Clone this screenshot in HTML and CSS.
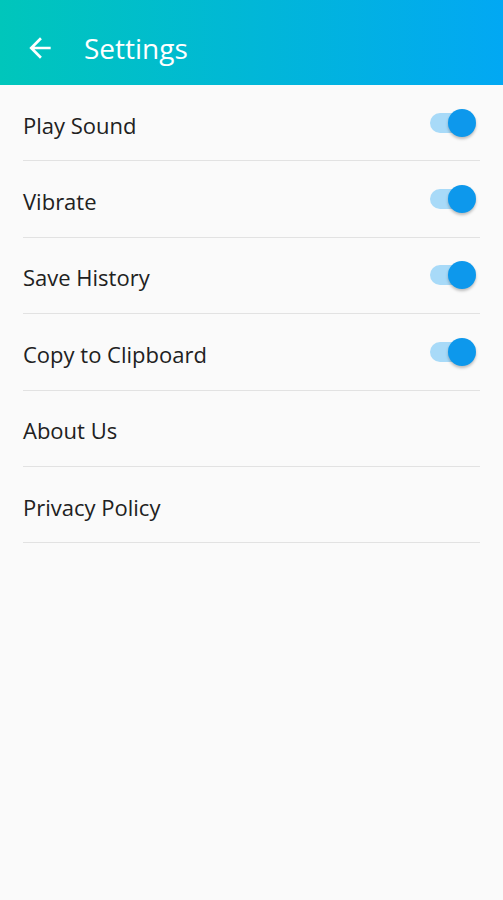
FILE: index.html
```html
<!DOCTYPE html>
<html lang="en">
  <head>
    <meta charset="UTF-8" />
    <meta name="viewport" content="width=device-width, initial-scale=1" />
    <title>Settings</title>
    <link rel="stylesheet" href="styles.css">
  </head>
  <body>
    <header class="toolbar">
      <button class="backBtn" title="Back">
        <svg width="32" height="32" viewBox="0 0 24 24">
          <path d="M20 11H7.83l5.59-5.59L12 4l-8 8 8 8 1.41-1.41L7.83 13H20v-2z" fill="#fff" />
        </svg>
      </button>
      <h1 class="toolbarTitle">Settings</h1>
    </header>

    <ul class="settingsList">
      <li class="settingsRow">
        <span class="rowLabel">Play Sound</span>
        <span class="switch"><span class="switchTrack"></span><span class="switchThumb"></span></span>
      </li>
      <li class="settingsRow">
        <span class="rowLabel">Vibrate</span>
        <span class="switch"><span class="switchTrack"></span><span class="switchThumb"></span></span>
      </li>
      <li class="settingsRow">
        <span class="rowLabel">Save History</span>
        <span class="switch"><span class="switchTrack"></span><span class="switchThumb"></span></span>
      </li>
      <li class="settingsRow">
        <span class="rowLabel">Copy to Clipboard</span>
        <span class="switch"><span class="switchTrack"></span><span class="switchThumb"></span></span>
      </li>
      <li class="settingsRow">
        <span class="rowLabel">About Us</span>
      </li>
      <li class="settingsRow">
        <span class="rowLabel">Privacy Policy</span>
      </li>
    </ul>
  </body>
</html>
```

FILE: styles.css
```css
html,
body {
  margin: 0;
  padding: 0;
  height: 100%;
  font-family: "Open Sans", "Noto Sans", sans-serif;
  background: #fafafa;
}

.toolbar {
  height: 85px;
  display: flex;
  align-items: center;
  background: linear-gradient(90deg, #00c6bb, #02a8f3);
  box-sizing: border-box;
  padding-left: 24px;
  padding-top: 10px;
}

.backBtn {
  width: 32px;
  height: 32px;
  padding: 0;
  border: none;
  background: none;
  display: flex;
  align-items: center;
  justify-content: center;
  cursor: pointer;
}

.toolbarTitle {
  margin: 0 0 0 28px;
  color: #fff;
  font-size: 28px;
  font-weight: 400;
  line-height: 1;
}

.settingsList {
  list-style: none;
  margin: 0 23px;
  padding: 0;
}

.settingsRow {
  height: 75.4px;
  display: flex;
  align-items: center;
  justify-content: space-between;
  border-bottom: 1px solid #e2e2e2;
}

.rowLabel {
  font-size: 22px;
  color: #212121;
  padding-top: 4px;
}

.switch {
  position: relative;
  width: 46px;
  height: 28px;
  margin-right: 4px;
}

.switchTrack {
  position: absolute;
  left: 0;
  top: 4px;
  width: 40px;
  height: 20px;
  border-radius: 10px;
  background: #a8daf8;
}

.switchThumb {
  position: absolute;
  right: 0;
  top: 0;
  width: 28px;
  height: 28px;
  border-radius: 50%;
  background: #0d98ec;
  box-shadow: 0 2px 3px rgba(0, 0, 0, 0.25);
}
```
